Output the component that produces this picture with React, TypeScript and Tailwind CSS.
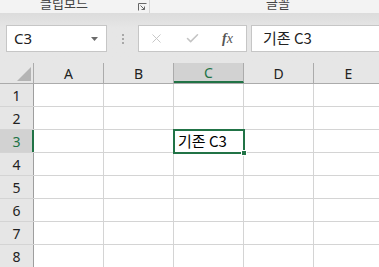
import { X, Check } from "lucide-react";

const cols = ["A", "B", "C", "D", "E"];
const rows = [1, 2, 3, 4, 5, 6, 7, 8];

const ui = { fontFamily: '"Noto Sans", "Noto Sans CJK KR", sans-serif' };
const kr = { fontFamily: '"Noto Sans CJK KR", "Noto Sans", sans-serif' };

function Ribbon() {
  return (
    <div className="flex h-[13px] overflow-hidden bg-[#f3f3f3] text-[13px] text-[#444]" style={kr}>
      <div className="relative w-[150px] shrink-0 border-r border-[#d6d6d6]">
        <div className="-mt-[6px] pl-[40px] leading-[18px]">클립보드</div>
        <svg className="absolute left-[138px] top-[3px]" width="9" height="8" viewBox="0 0 9 8">
          <path d="M0.5 0.5H8.5M0.5 0.5V7.5" stroke="#666" fill="none" />
          <path d="M2.5 2.5L6.5 6.5M6.5 3.5V6.5H3.5" stroke="#666" fill="none" />
        </svg>
      </div>
      <div className="-mt-[6px] pl-[116px] leading-[18px]">글꼴</div>
    </div>
  );
}

function FormulaBar() {
  return (
    <div className="h-[50px] bg-gradient-to-b from-[#dcdcdc] via-[#e6e6e6] via-30% to-[#e6e6e6] pt-[12px]">
      <div className="flex h-[27px] items-stretch">
        <div className="ml-[6px] flex w-[101px] shrink-0 items-center justify-between border border-[#c6c6c6] bg-white pl-[7px] pr-[8px]">
          <span className="text-[15px] text-[#222]" style={ui}>C3</span>
          <svg width="7" height="4" viewBox="0 0 7 4">
            <path d="M0 0H7L3.5 4Z" fill="#6b6b6b" />
          </svg>
        </div>
        <div className="flex w-[31px] shrink-0 flex-col items-center justify-center gap-[2px]">
          <span className="h-[2px] w-[2px] bg-[#a8a8a8]" />
          <span className="h-[2px] w-[2px] bg-[#a8a8a8]" />
          <span className="h-[2px] w-[2px] bg-[#a8a8a8]" />
        </div>
        <div className="flex w-[109px] shrink-0 items-center border border-[#c6c6c6] bg-white">
          <X className="ml-[10px] h-[15px] w-[15px] text-[#c4c4c4]" strokeWidth={1.5} />
          <Check className="ml-[21px] h-[15px] w-[15px] text-[#c4c4c4]" strokeWidth={2.5} />
          <span className="ml-[22px] text-[14px] italic text-[#555]" style={{ fontFamily: '"Liberation Serif", serif' }}>
            <span className="font-bold">f</span>x
          </span>
        </div>
        <div className="ml-[4px] flex flex-1 items-center border border-r-0 border-[#c6c6c6] bg-white pl-[11px]">
          <span className="text-[15px] text-[#222]" style={kr}>기존 C3</span>
        </div>
      </div>
    </div>
  );
}

function Grid() {
  return (
    <div className="bg-white" style={ui}>
      <div className="flex h-[21px] border-b border-[#ababab] bg-[#e6e6e6]">
        <div className="relative w-[34px] shrink-0 border-r border-[#ababab]">
          <svg className="absolute left-[17px] top-[4px]" width="14" height="14" viewBox="0 0 14 14">
            <path d="M14 0V14H0Z" fill="#b4b4b4" />
          </svg>
        </div>
        {cols.map((c) =>
          c === "C" ? (
            <div
              key={c}
              className="flex w-[70px] shrink-0 items-center justify-center border-b-2 border-r border-b-[#217346] border-r-[#ababab] bg-[#d2d2d2] pt-[1px] text-[14px] text-[#217346]"
            >
              {c}
            </div>
          ) : (
            <div
              key={c}
              className="flex w-[70px] shrink-0 items-center justify-center border-r border-[#ababab] text-[14px] text-[#222]"
            >
              {c}
            </div>
          )
        )}
      </div>
      {rows.map((r) => (
        <div key={r} className="flex h-[23px] border-b border-[#d4d4d4]">
          {r === 3 ? (
            <div className="flex w-[34px] shrink-0 items-center justify-center border-r-2 border-[#217346] bg-[#d2d2d2] pl-[1px] text-[14px] text-[#217346]">
              {r}
            </div>
          ) : (
            <div className="flex w-[34px] shrink-0 items-center justify-center border-r border-[#9e9e9e] bg-[#e6e6e6] text-[14px] text-[#222]">
              {r}
            </div>
          )}
          {cols.map((c) => (
            <div key={c} className="relative w-[70px] shrink-0 border-r border-[#d4d4d4]">
              {r === 3 && c === "C" && (
                <div className="absolute -left-[1px] -top-[1px] z-10 h-[25px] w-[72px] border-2 border-[#217346] pl-[3px] text-[15px] leading-[20px] text-black" style={kr}>
                  기존 C3
                  <span className="absolute -bottom-[4px] -right-[4px] h-[6px] w-[6px] border border-white bg-[#217346]" />
                </div>
              )}
            </div>
          ))}
        </div>
      ))}
    </div>
  );
}

export default function App() {
  return (
    <div className="h-[267px] w-[379px] overflow-hidden bg-white">
      <Ribbon />
      <FormulaBar />
      <Grid />
    </div>
  );
}
